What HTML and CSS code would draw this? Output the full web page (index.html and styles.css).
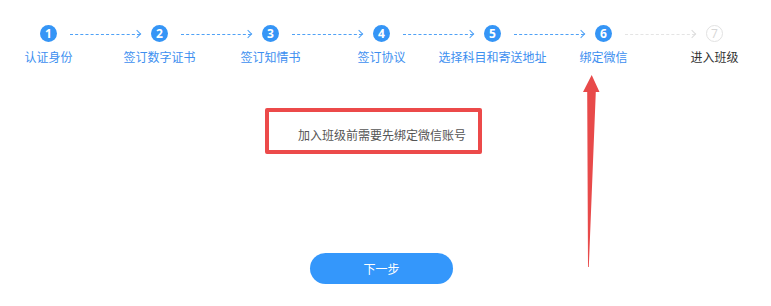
FILE: index.html
```html
<!DOCTYPE html>
<html lang="zh-CN">
<head>
    <meta charset="UTF-8">
    <meta name="viewport" content="width=device-width, initial-scale=1.0">
    <title>绑定微信</title>
    <link rel="stylesheet" href="styles.css">
</head>
<body>
    <div class="steps">
        <div class="track">
            <span class="dot">1</span><span class="line"></span>
            <span class="dot">2</span><span class="line"></span>
            <span class="dot">3</span><span class="line"></span>
            <span class="dot">4</span><span class="line"></span>
            <span class="dot">5</span><span class="line"></span>
            <span class="dot">6</span><span class="line wait"></span>
            <span class="dot wait">7</span>
        </div>
        <div class="labels">
            <span>认证身份</span>
            <span>签订数字证书</span>
            <span>签订知情书</span>
            <span>签订协议</span>
            <span>选择科目和寄送地址</span>
            <span>绑定微信</span>
            <span class="wait">进入班级</span>
        </div>
    </div>
    <div class="notice">加入班级前需要先绑定微信账号</div>
    <button class="next">下一步</button>
    <!-- 标注箭头 -->
    <svg class="mark" width="24" height="200" viewBox="0 0 24 200">
        <polygon points="11.7,3 19.5,20 15.8,20 8.8,195 8,195 7.2,20 3,20" fill="#e84a4a"/>
    </svg>
</body>
</html>
```

FILE: styles.css
```css
*{padding: 0;margin: 0;box-sizing: border-box;}
body{font-family: "Noto Sans CJK SC", "Microsoft YaHei", sans-serif;font-size: 12px;background: #fff;position: relative;width: 771px;height: 306px;overflow: hidden;}
.steps{padding-top: 25px;}
.track{display: flex;align-items: center;width: 683px;margin-left: 40px;}
.dot{width: 17px;height: 17px;border-radius: 50%;background: #3595f6;color: #fff;font-size: 12px;line-height: 17px;text-align: center;font-weight: bold;font-family: "Open Sans", sans-serif;flex: none;}
.dot.wait{background: #fff;border: 1px solid #e2e2e2;color: #d6d6d6;line-height: 15px;font-weight: normal;}
.line{flex: 1;margin: 1px 11px 0 13px;border-top: 1px dashed #4fa1f6;position: relative;}
.line:after{content: "";position: absolute;right: 0;top: -3.5px;width: 5px;height: 5px;border-top: 1px solid #4fa1f6;border-right: 1px solid #4fa1f6;transform: rotate(45deg);}
.line.wait{border-top-color: #e4e4e4;}
.line.wait:after{border-color: #dcdcdc;}
.labels{display: grid;grid-template-columns: repeat(7, 111px);margin: 7px 0 0 -7px;}
.labels span{text-align: center;line-height: 16px;color: #3d8ff0;white-space: nowrap;}
.labels span.wait{color: #333;}
.notice{margin: 43px 0 0 265px;width: 217px;height: 46px;border: 4px solid #ec4a4a;border-radius: 2px;padding: 15px 0 0 29px;line-height: 16px;color: #555;}
.next{display: block;margin: 99px 0 0 310px;width: 143px;height: 31px;border: none;border-radius: 16px;background: #3497fb;color: #fff;font-family: inherit;font-size: 12px;}
.mark{position: absolute;left: 580px;top: 72px;}
```
